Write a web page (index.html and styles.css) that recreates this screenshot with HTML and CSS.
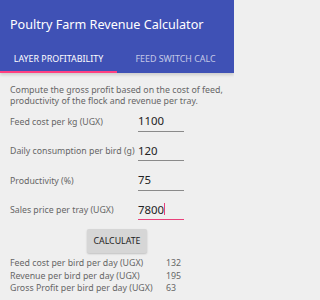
FILE: index.html
```html
<!DOCTYPE html>
<html>
<head>
<meta charset="utf-8">
<link rel="stylesheet" href="styles.css">
</head>
<body>
<header class="appbar">
  <div class="toolbar">Poultry Farm Revenue Calculator</div>
  <nav class="tabs">
    <div class="tab active">LAYER PROFITABILITY</div>
    <div class="tab">FEED SWITCH CALC</div>
  </nav>
</header>
<main class="content">
  <p class="intro">Compute the gross profit based on the cost of feed, productivity of the flock and revenue per tray.</p>
  <div class="row">
    <span class="label">Feed cost per kg (UGX)</span>
    <span class="field">1100</span>
  </div>
  <div class="row">
    <span class="label">Daily consumption per bird (g)</span>
    <span class="field">120</span>
  </div>
  <div class="row">
    <span class="label">Productivity (%)</span>
    <span class="field">75</span>
  </div>
  <div class="row">
    <span class="label">Sales price per tray (UGX)</span>
    <span class="field focused">7800<span class="caret"></span></span>
  </div>
  <div class="actions"><button class="btn">CALCULATE</button></div>
  <div class="results">
    <div class="res"><span class="rlabel">Feed cost per bird per day (UGX)</span><span class="rval">132</span></div>
    <div class="res"><span class="rlabel">Revenue per bird per day (UGX)</span><span class="rval">195</span></div>
    <div class="res"><span class="rlabel">Gross Profit per bird per day (UGX)</span><span class="rval">63</span></div>
  </div>
</main>
</body>
</html>
```
FILE: styles.css
```css
* { box-sizing: border-box; }
html, body { margin: 0; padding: 0; }
html { background: #efefef; }
body {
  width: 234px;
  height: 300px;
  overflow: hidden;
  background: #efefef;
  font-family: "Noto Sans", "Open Sans", sans-serif;
}
.appbar {
  background: #3f51b5;
  color: #fff;
  box-shadow: 0 2px 3px rgba(0,0,0,0.15);
}
.toolbar {
  height: 48px;
  display: flex;
  align-items: center;
  padding-left: 10px;
  font-size: 12.6px;
}
.tabs {
  display: flex;
  height: 25px;
}
.tab {
  flex: 1;
  display: flex;
  align-items: center;
  justify-content: center;
  font-size: 8.9px;
  padding-bottom: 5px;
  color: rgba(255,255,255,0.7);
}
.tab.active {
  color: #fff;
  border-bottom: 2px solid #ff4081;
  padding-bottom: 3px;
}
.content {
  padding: 12px 10px 0 10px;
}
.intro {
  margin: 0;
  font-size: 8.8px;
  line-height: 11px;
  color: #666;
}
.row {
  display: flex;
  align-items: center;
  height: 29.5px;
}
.label {
  flex: 0 0 128px;
  white-space: nowrap;
  font-size: 8.75px;
  color: #666;
}
.field {
  flex: 0 0 46px;
  height: 20px;
  border-bottom: 1px solid #8a8a8a;
  font-size: 11.4px;
  color: #222;
  display: flex;
  align-items: center;
  padding-bottom: 1px;
}
.field.focused {
  border-bottom: 1.5px solid #e9407a;
}
.caret {
  display: inline-block;
  width: 1px;
  height: 12px;
  background: #e9407a;
}
.actions {
  display: flex;
  justify-content: center;
  margin-top: 4px;
}
.btn {
  width: 60px;
  height: 24px;
  border: none;
  border-radius: 2px;
  background: #d6d6d6;
  box-shadow: 0 1px 2px rgba(0,0,0,0.2);
  font-family: inherit;
  font-size: 8.8px;
  color: #222;
  padding: 0;
}
.results {
  margin-top: 4px;
}
.res {
  display: flex;
  height: 12.5px;
  align-items: center;
  font-size: 8.8px;
  color: #666;
}
.rlabel { flex: 0 0 156px; white-space: nowrap; }
```
